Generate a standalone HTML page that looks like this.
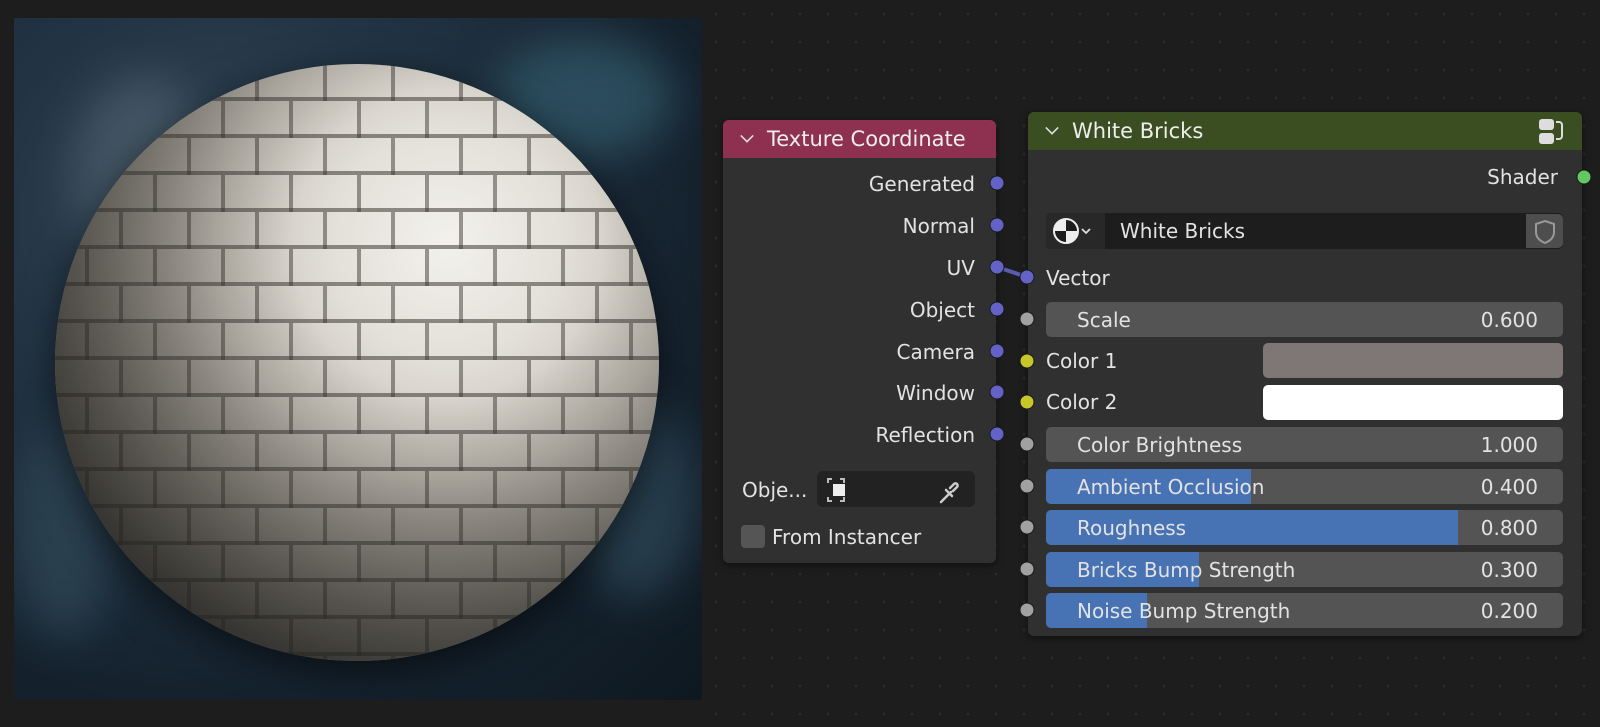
<!DOCTYPE html>
<html><head><meta charset="utf-8"><style>
*{margin:0;padding:0;box-sizing:border-box}
body{width:1600px;height:727px;background:#1d1d1d;position:relative;overflow:hidden;font-family:"DejaVu Sans","Liberation Sans",sans-serif;color:#e2e2e2;font-size:20px;line-height:24px}
.grid{position:absolute;left:702px;top:0;right:0;bottom:0;background-image:radial-gradient(circle,#2b2b2b 1.2px,transparent 1.6px);background-size:28px 28px}
.pv{position:absolute;left:14px;top:18px;width:688px;height:682px;background:radial-gradient(ellipse at 30% 30%,#34485a 0%,#223444 35%,#15222e 70%,#0e1820 100%);overflow:hidden}
.pv .b1{position:absolute;border-radius:50%;filter:blur(22px);opacity:.8}
.sph{position:absolute;left:41px;top:46px;width:604px;height:597px;border-radius:50%;overflow:hidden;
background:radial-gradient(circle 460px at 65% 30%,#f3f1ec 0%,#e3e0d9 25%,#c4c0b7 50%,#9a968d 72%,#77736b 90%,#5c5954 100%);box-shadow:0 10px 40px rgba(0,0,0,.6)}
.sph .r{position:absolute;inset:0;background:repeating-linear-gradient(180deg,transparent 0 33px,rgba(60,56,50,.55) 33px 37px)}
.sph .c{position:absolute;inset:0;background:repeating-linear-gradient(90deg,transparent 0 64px,rgba(60,56,50,.5) 64px 68px);mask:repeating-linear-gradient(180deg,#000 0 37px,transparent 37px 74px);-webkit-mask:repeating-linear-gradient(180deg,#000 0 37px,transparent 37px 74px)}
.sph .c2{position:absolute;inset:0;background:repeating-linear-gradient(90deg,transparent 0 30px,rgba(60,56,50,.5) 30px 34px,transparent 34px 68px);mask:repeating-linear-gradient(180deg,transparent 0 37px,#000 37px 74px);-webkit-mask:repeating-linear-gradient(180deg,transparent 0 37px,#000 37px 74px)}
.sph .sh{position:absolute;inset:0;border-radius:50%;background:radial-gradient(circle 440px at 65% 30%,transparent 35%,rgba(40,38,35,.35) 70%,rgba(25,24,22,.6) 100%)}
.node{position:absolute;background:#303030;border-radius:6px;box-shadow:0 2px 8px rgba(0,0,0,.5)}
.hd{height:38px;border-radius:6px 6px 0 0;display:flex;align-items:center;padding-left:18px;font-size:21px;color:#eee}
.chev{width:12px;height:12px;margin-right:14px;margin-top:-6px;border-right:2px solid #ddd;border-bottom:2px solid #ddd;transform:rotate(45deg) scale(.8)}
.t{position:absolute;white-space:nowrap}
.sock{position:absolute;width:15px;height:15px;border-radius:50%;border:1.5px solid #1a1a1a;transform:translate(-50%,-50%)}
.pu{background:#6363c7}.gr{background:#a1a1a1}.ye{background:#c7c729}.gn{background:#63c763}
.fld{position:absolute;left:1046px;width:517px;height:35px;background:#545454;border-radius:5px;overflow:hidden}
.fld .fill{position:absolute;left:0;top:0;bottom:0;background:#4772b3}
.fld .l{position:absolute;left:31px;top:6px}
.fld .v{position:absolute;right:25px;top:6px}
</style></head><body>
<div class="grid"></div>
<div class="pv">
 <div class="b1" style="left:60px;top:60px;width:140px;height:200px;background:#4a5c6a"></div>
 <div class="b1" style="left:480px;top:20px;width:180px;height:120px;background:#2f5566"></div>
 <div class="b1" style="left:560px;top:380px;width:120px;height:200px;background:#2c4656"></div>
 <div class="b1" style="left:0px;top:400px;width:100px;height:220px;background:#2e4656"></div>
 <div class="sph"><div class="r"></div><div class="c"></div><div class="c2"></div><div class="sh"></div></div>
</div>

<svg style="position:absolute;left:0;top:0" width="1600" height="727"><line x1="997" y1="267" x2="1027" y2="277" stroke="#5a5ab0" stroke-width="4"/></svg>

<div class="node" style="left:723px;top:120px;width:273px;height:443px">
 <div class="hd" style="background:#8e3150"><div class="chev"></div>Texture Coordinate</div>
</div>
<div class="t" style="right:625px;top:172px">Generated</div>
<div class="t" style="right:625px;top:214px">Normal</div>
<div class="t" style="right:625px;top:256px">UV</div>
<div class="t" style="right:625px;top:298px">Object</div>
<div class="t" style="right:625px;top:340px">Camera</div>
<div class="t" style="right:625px;top:381px">Window</div>
<div class="t" style="right:625px;top:423px">Reflection</div>
<div class="t" style="left:742px;top:478px">Obje...</div>
<div style="position:absolute;left:817px;top:471px;width:158px;height:36px;background:#222;border-radius:6px"></div>
<svg style="position:absolute;left:822px;top:474px" width="150" height="32">
 <path d="M4 8V4h4M16 4h4v4M20 22v4h-4M8 26H4v-4" stroke="#bbb" stroke-width="2" fill="none" transform="translate(2,1)"/>
 <rect x="11" y="10" width="12" height="12" fill="#eee"/>
 <path d="M119 28l10-10M124 16l6 6M128 14l4-4a2 2 0 013 3l-4 4" stroke="#ccc" stroke-width="2.5" fill="none" stroke-linecap="round"/>
</svg>
<div style="position:absolute;left:741px;top:525px;width:24px;height:23px;background:#555;border-radius:4px"></div>
<div class="t" style="left:772px;top:525px">From Instancer</div>
<div class="sock pu" style="left:997px;top:183px"></div>
<div class="sock pu" style="left:997px;top:225px"></div>
<div class="sock pu" style="left:997px;top:267px"></div>
<div class="sock pu" style="left:997px;top:309px"></div>
<div class="sock pu" style="left:997px;top:351px"></div>
<div class="sock pu" style="left:997px;top:392px"></div>
<div class="sock pu" style="left:997px;top:434px"></div>

<div class="node" style="left:1028px;top:112px;width:554px;height:524px">
 <div class="hd" style="background:#3a4e22"><div class="chev"></div>White Bricks</div>
</div>
<svg style="position:absolute;left:1536px;top:116px" width="30" height="32">
 <rect x="3" y="3" width="15" height="11" rx="3" fill="#ddd"/><rect x="3" y="17" width="15" height="11" rx="3" fill="#ddd"/>
 <path d="M20 6h3a3 3 0 013 3v11a3 3 0 01-3 3h-3" stroke="#ddd" stroke-width="2" fill="none"/>
</svg>
<div class="t" style="right:42px;top:165px">Shader</div>
<div class="sock gn" style="left:1584px;top:177px"></div>
<div style="position:absolute;left:1046px;top:213px;width:517px;height:36px;background:#1d1d1d;border-radius:5px"></div>
<div style="position:absolute;left:1046px;top:213px;width:59px;height:36px;background:#282828;border-radius:5px 0 0 5px"></div>
<svg style="position:absolute;left:1052px;top:217px" width="50" height="28">
 <circle cx="14" cy="14" r="12" fill="#eee"/>
 <path d="M14 2a12 12 0 0112 12H14z" fill="#1d1d1d"/>
 <path d="M2 14h12v12a12 12 0 01-12-12z" fill="#1d1d1d"/>
 <circle cx="14" cy="14" r="12" fill="none" stroke="#eee" stroke-width="2"/>
 <path d="M30 12l4 4 4-4" stroke="#ddd" stroke-width="1.8" fill="none"/>
</svg>
<div class="t" style="left:1120px;top:219px">White Bricks</div>
<div style="position:absolute;left:1526px;top:214px;width:37px;height:34px;background:#4e4e4e;border-radius:0 5px 5px 0"></div>
<svg style="position:absolute;left:1532px;top:218px" width="26" height="28"><path d="M13 3l9 3v8c0 6-4 9-9 11-5-2-9-5-9-11V6z" fill="none" stroke="#999" stroke-width="2"/></svg>
<div class="t" style="left:1046px;top:266px">Vector</div>
<div class="sock pu" style="left:1027px;top:277px"></div>

<div class="fld" style="top:302px"><div class="l">Scale</div><div class="v">0.600</div></div>
<div class="t" style="left:1046px;top:349px">Color 1</div>
<div style="position:absolute;left:1263px;top:343px;width:300px;height:35px;background:#7f7775;border-radius:5px"></div>
<div class="t" style="left:1046px;top:390px">Color 2</div>
<div style="position:absolute;left:1263px;top:385px;width:300px;height:35px;background:#fff;border-radius:5px"></div>
<div class="fld" style="top:427px"><div class="l">Color Brightness</div><div class="v">1.000</div></div>
<div class="fld" style="top:469px"><div class="fill" style="width:205px"></div><div class="l">Ambient Occlusion</div><div class="v">0.400</div></div>
<div class="fld" style="top:510px"><div class="fill" style="width:412px"></div><div class="l">Roughness</div><div class="v">0.800</div></div>
<div class="fld" style="top:552px"><div class="fill" style="width:153px"></div><div class="l">Bricks Bump Strength</div><div class="v">0.300</div></div>
<div class="fld" style="top:593px"><div class="fill" style="width:101px"></div><div class="l">Noise Bump Strength</div><div class="v">0.200</div></div>
<div class="sock gr" style="left:1027px;top:319px"></div>
<div class="sock ye" style="left:1027px;top:361px"></div>
<div class="sock ye" style="left:1027px;top:402px"></div>
<div class="sock gr" style="left:1027px;top:444px"></div>
<div class="sock gr" style="left:1027px;top:486px"></div>
<div class="sock gr" style="left:1027px;top:527px"></div>
<div class="sock gr" style="left:1027px;top:569px"></div>
<div class="sock gr" style="left:1027px;top:610px"></div>
</body></html>
